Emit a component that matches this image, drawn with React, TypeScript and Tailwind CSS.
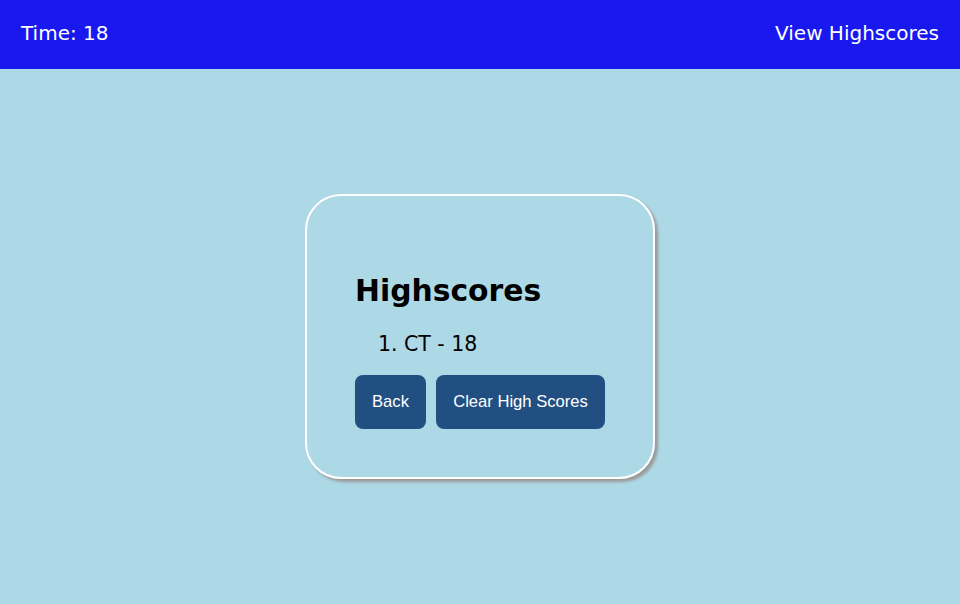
import React from "react";

export default function App() {
  return (
    <div className="w-[960px] h-[604px] flex flex-col bg-[#add8e6]">
      <header className="h-[69px] bg-[#1919ef] flex items-center justify-between px-[21px] pb-[4px] text-white text-[20px] font-['DejaVu_Sans',sans-serif]">
        <span>Time: 18</span>
        <span>View Highscores</span>
      </header>
      <main className="flex-1 flex items-center justify-center">
        <div className="w-[350px] h-[285px] border-2 border-white rounded-[36px] shadow-[3px_3px_3px_#9a9a9a] pl-[48px] pt-[77px] font-['DejaVu_Sans',sans-serif]">
          <h1 className="text-[29.8px] font-bold leading-[36px] text-black">Highscores</h1>
          <ol className="list-decimal pl-[49px] mt-[23px] text-[20.5px] leading-[24px] text-black">
            <li>CT - 18</li>
          </ol>
          <div className="flex gap-[10px] mt-[19px] font-['Liberation_Sans',sans-serif] text-[16.6px] text-white">
            <button className="w-[71px] h-[54px] rounded-[8px] bg-[#224f82] flex items-center justify-center">Back</button>
            <button className="w-[169px] h-[54px] rounded-[8px] bg-[#224f82] flex items-center justify-center">Clear High Scores</button>
          </div>
        </div>
      </main>
    </div>
  );
}
